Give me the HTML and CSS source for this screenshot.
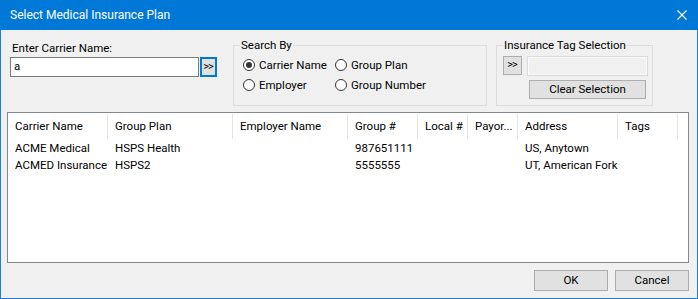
FILE: index.html
```html
<!DOCTYPE html>
<html>
<head>
<meta charset="utf-8">
<link rel="stylesheet" href="styles.css">
</head>
<body>
<div class="window">
  <div class="titlebar">
    <span class="title">Select Medical Insurance Plan</span>
    <svg class="close" width="10" height="10" viewBox="0 0 10 10"><path d="M0.5 0.5 L9.5 9.5 M9.5 0.5 L0.5 9.5" stroke="#fff" stroke-width="1.1" fill="none"/></svg>
  </div>
  <div class="content">
    <div class="toprow">
      <div class="carrier">
        <div class="label">Enter Carrier Name:</div>
        <div class="inputrow">
          <div class="textbox">a</div>
          <div class="btn-go focused">&gt;&gt;</div>
        </div>
      </div>
      <fieldset class="group searchby">
        <legend>Search By</legend>
        <div class="radios">
          <div class="radio"><span class="dot checked"></span>Carrier Name</div>
          <div class="radio"><span class="dot"></span>Group Plan</div>
          <div class="radio"><span class="dot"></span>Employer</div>
          <div class="radio"><span class="dot"></span>Group Number</div>
        </div>
      </fieldset>
      <fieldset class="group tags">
        <legend>Insurance Tag Selection</legend>
        <div class="tagrow">
          <div class="btn-go plain">&gt;&gt;</div>
          <div class="tagbox"></div>
        </div>
        <div class="btn clear">Clear Selection</div>
      </fieldset>
    </div>
    <div class="list">
      <div class="row header">
        <div class="c c1">Carrier Name</div>
        <div class="c c2">Group Plan</div>
        <div class="c c3">Employer Name</div>
        <div class="c c4">Group #</div>
        <div class="c c5">Local #</div>
        <div class="c c6">Payor...</div>
        <div class="c c7">Address</div>
        <div class="c c8">Tags</div>
      </div>
      <div class="row item">
        <div class="c c1">ACME Medical</div>
        <div class="c c2">HSPS Health</div>
        <div class="c c3"></div>
        <div class="c c4">987651111</div>
        <div class="c c5"></div>
        <div class="c c6"></div>
        <div class="c c7">US, Anytown</div>
        <div class="c c8"></div>
      </div>
      <div class="row item">
        <div class="c c1">ACMED Insurance</div>
        <div class="c c2">HSPS2</div>
        <div class="c c3"></div>
        <div class="c c4">5555555</div>
        <div class="c c5"></div>
        <div class="c c6"></div>
        <div class="c c7">UT, American Fork</div>
        <div class="c c8"></div>
      </div>
    </div>
    <div class="footer">
      <div class="btn ok">OK</div>
      <div class="btn cancel">Cancel</div>
    </div>
  </div>
</div>
</body>
</html>
```

FILE: styles.css
```css
html, body {
  margin: 0;
  padding: 0;
  background: #f0f0f0;
}
body {
  font-family: "Segoe UI", Roboto, "Liberation Sans", sans-serif;
  font-size: 11.5px;
  color: #000;
}
.window {
  width: 698px;
  height: 299px;
  box-sizing: border-box;
  border: 1px solid #1a81d9;
  border-top: none;
  background: #f0f0f0;
  display: flex;
  flex-direction: column;
}
.titlebar {
  height: 30px;
  margin: 0 -1px;
  background: #0078d7;
  color: #fff;
  display: flex;
  align-items: center;
  justify-content: space-between;
  padding: 0 10px 0 10px;
  box-sizing: border-box;
}
.title {
  font-size: 12px;
  line-height: 16px;
}
.close {
  margin-right: 1px;
  display: block;
}
.content {
  flex: 1;
  display: flex;
  flex-direction: column;
  padding: 7px 9px 0 6px;
}
.toprow {
  display: flex;
  height: 69px;
}
.carrier {
  width: 207px;
  margin-left: 3px;
  padding-top: 3px;
}
.label {
  line-height: 17px;
  height: 17px;
  margin-left: 2px;
}
.inputrow {
  display: flex;
  gap: 1px;
}
.textbox {
  width: 189px;
  height: 20px;
  box-sizing: border-box;
  border: 1px solid #7a7a7a;
  background: #fff;
  padding-left: 3px;
  line-height: 17px;
}
.btn-go {
  width: 17px;
  height: 20px;
  box-sizing: border-box;
  background: #e1e1e1;
  font-size: 11px;
  line-height: 15px;
  text-align: center;
  letter-spacing: -1px;
  text-indent: -1px;
}
.btn-go.focused {
  border: 2px solid #0078d7;
}
.btn-go.plain {
  width: 19px;
  height: 19px;
  border: 1px solid #adadad;
  line-height: 16px;
}
.group {
  margin: 0;
  border: 1px solid #dcdcdc;
  box-sizing: border-box;
  height: 69px;
  padding: 0;
}
.group legend {
  line-height: 16px;
  padding: 0 1px;
  margin-left: 6px;
}
.searchby {
  width: 254px;
  margin-left: 16px;
}
.radios {
  display: grid;
  grid-template-columns: 92px auto;
  row-gap: 4px;
  padding: 4px 0 0 9px;
}
.radio {
  display: flex;
  align-items: center;
  height: 16px;
  line-height: 16px;
}
.dot {
  width: 12px;
  height: 12px;
  box-sizing: border-box;
  border: 1px solid #333;
  border-radius: 50%;
  background: #fff;
  margin-right: 4px;
  display: flex;
  align-items: center;
  justify-content: center;
}
.dot.checked::after {
  content: "";
  width: 6px;
  height: 6px;
  border-radius: 50%;
  background: #333;
}
.tags {
  width: 157px;
  margin-left: 9px;
}
.tagrow {
  display: flex;
  gap: 5px;
  padding: 3px 0 0 6px;
  align-items: flex-start;
}
.tagbox {
  width: 121px;
  height: 20px;
  box-sizing: border-box;
  border: 1px solid #dadada;
  background: #f0f0f0;
  box-shadow: inset 0 0 0 1px #fafafa;
}
.btn {
  box-sizing: border-box;
  border: 1px solid #adadad;
  background: #e1e1e1;
  text-align: center;
  height: 20px;
  line-height: 18px;
}
.clear {
  width: 117px;
  height: 19px;
  line-height: 17px;
  margin: 4px 0 0 32px;
}
.list {
  margin-top: 6px;
  width: 682px;
  height: 151px;
  box-sizing: border-box;
  border: 1px solid #828790;
  background: #fff;
}
.row {
  display: flex;
}
.header {
  height: 25px;
  margin-top: 1px;
}
.header .c {
  border-right: 1px solid #e5e5e5;
  line-height: 24px;
  overflow: hidden;
}
.row.item {
  height: 17px;
}
.item .c {
  height: 17px;
  line-height: 17px;
  overflow: visible;
}
.header + .item {
  margin-top: 1px;
}
.c {
  box-sizing: border-box;
  padding-left: 7px;
  white-space: nowrap;
}
.c1 { width: 100px; }
.c2 { width: 125px; }
.c3 { width: 115px; }
.c4 { width: 70px; }
.c5 { width: 50px; }
.c6 { width: 50px; }
.c7 { width: 100px; }
.c8 { width: 60px; }
.footer {
  display: flex;
  justify-content: flex-end;
  gap: 7px;
  margin-top: 7px;
  width: 682px;
}
.ok, .cancel {
  width: 74px;
  height: 21px;
  line-height: 19px;
}
```
